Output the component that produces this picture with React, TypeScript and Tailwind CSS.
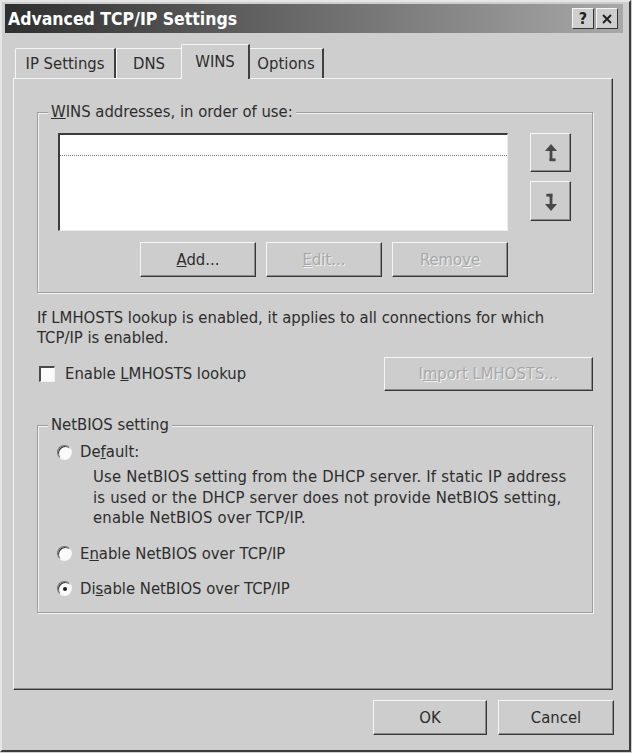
import React from "react";

function Btn({
  children,
  disabled,
  className,
}: {
  children: React.ReactNode;
  disabled?: boolean;
  className: string;
}) {
  return (
    <div
      className={
        "flex items-center justify-center bg-[#cdcdcd] border border-t-[#f6f6f6] border-l-[#f6f6f6] border-r-[#363636] border-b-[#363636] shadow-[inset_-1px_-1px_0_#8c8c8c] " +
        className
      }
    >
      <span
        className={
          disabled
            ? "text-[#a8a8a8] [text-shadow:1px_1px_0_#f3f3f3]"
            : "text-[#2c2c2c]"
        }
      >
        {children}
      </span>
    </div>
  );
}

function Radio({ checked }: { checked?: boolean }) {
  return (
    <div className="w-[15px] h-[15px] rounded-full bg-[#fafafa] border border-t-[#6e6e6e] border-l-[#6e6e6e] border-r-[#f4f4f4] border-b-[#f4f4f4] flex items-center justify-center shadow-[inset_1px_1px_0_#3a3a3a]">
      {checked && <div className="w-[4px] h-[4px] rounded-full bg-[#1e1e1e]" />}
    </div>
  );
}

function UpArrow() {
  return (
    <svg width="14" height="20" viewBox="0 0 14 20">
      <path d="M1 8 L7 1 L13 8 Z" fill="#484848" />
      <rect x="5.6" y="7" width="2.8" height="11" fill="#484848" />
      <rect x="5.6" y="15.4" width="6" height="2.8" fill="#484848" />
    </svg>
  );
}

function DownArrow() {
  return (
    <svg width="14" height="20" viewBox="0 0 14 20">
      <rect x="2.4" y="1.8" width="6" height="2.8" fill="#484848" />
      <rect x="5.6" y="1.8" width="2.8" height="11" fill="#484848" />
      <path d="M1 12 L7 19 L13 12 Z" fill="#484848" />
    </svg>
  );
}

export default function App() {
  return (
    <div className="w-[632px] h-[753px] overflow-hidden bg-[#cecece] font-['DejaVu_Sans_Condensed','DejaVu_Sans','Liberation_Sans',sans-serif] text-[16.5px] leading-[20px] text-[#2d2d2d]">
      <div className="w-[631px] h-[752px] border-t-2 border-l-2 border-t-[#e6e6e6] border-l-[#e6e6e6] border-r-2 border-b-2 border-r-[#3c3c3c] border-b-[#3c3c3c] flex flex-col">
        {/* Title bar */}
        <div className="ml-[3px] mt-[2px] w-[618px] h-[29px] bg-[linear-gradient(to_right,#2f2f2f,#5a5a5a_35%,#a8a8a8)] flex items-center pl-[3px] pr-[5px]">
          <span className="font-bold text-white text-[17.5px]">
            Advanced TCP/IP Settings
          </span>
          <div className="ml-auto flex gap-[2px]">
            <div className="w-[22px] h-[21px] bg-[#cecece] border border-t-[#f6f6f6] border-l-[#f6f6f6] border-r-[#363636] border-b-[#363636] flex items-center justify-center font-bold text-[16px] text-[#222]">
              ?
            </div>
            <div className="w-[22px] h-[21px] bg-[#cecece] border border-t-[#f6f6f6] border-l-[#f6f6f6] border-r-[#363636] border-b-[#363636] flex items-center justify-center">
              <svg width="10" height="10" viewBox="0 0 10 10">
                <path d="M1 1 L9 9 M9 1 L1 9" stroke="#222" strokeWidth="2" />
              </svg>
            </div>
          </div>
        </div>

        {/* Tabs */}
        <div className="mt-[11px] ml-[13px] h-[34px] flex items-start">
          <div className="mt-[4px] w-[101px] h-[30px] border-t border-l border-t-[#f6f6f6] border-l-[#f6f6f6] border-r-2 border-r-[#404040] rounded-tl-[2px] flex items-center justify-center">
            IP Settings
          </div>
          <div className="mt-[4px] w-[65px] h-[30px] border-t border-l border-t-[#f6f6f6] border-l-[#f6f6f6] flex items-center justify-center">
            DNS
          </div>
          <div className="relative z-10 w-[69px] h-[35px] bg-[#cecece] border-t border-l border-t-[#f6f6f6] border-l-[#f6f6f6] border-r-2 border-r-[#404040] rounded-tl-[2px] flex items-center justify-center">
            WINS
          </div>
          <div className="mt-[4px] w-[74px] h-[30px] border-t border-t-[#f6f6f6] border-r-2 border-r-[#404040] flex items-center justify-center">
            Options
          </div>
        </div>

        {/* Panel */}
        <div className="ml-[11px] w-[600px] h-[612px] border border-t-[#f6f6f6] border-l-[#f6f6f6] border-r-[#363636] border-b-[#363636] shadow-[inset_-1px_-1px_0_#8c8c8c] pl-[23px] flex flex-col">
          {/* WINS addresses group */}
          <div className="relative mt-[33px] w-[556px] h-[181px] border border-[#9d9d9d] shadow-[inset_1px_1px_0_#f3f3f3,1px_1px_0_#f3f3f3] pt-[20px] pl-[20px]">
            <div className="absolute -top-[11px] left-[10px] px-[3px] bg-[#cecece]">
              <u>W</u>INS addresses, in order of use:
            </div>
            <div className="flex">
              <div className="w-[450px] h-[98px] bg-white border-t-2 border-l-2 border-t-[#3c3c3c] border-l-[#3c3c3c] border-r border-b border-r-[#ededed] border-b-[#ededed]">
                <div className="h-[21px] border-b border-dotted border-[#7c7c7c]" />
              </div>
              <div className="ml-[22px] flex flex-col">
                <Btn className="w-[41px] h-[39px]">
                  <span className="flex pt-[1px]">
                    <UpArrow />
                  </span>
                </Btn>
                <Btn className="mt-[9px] w-[41px] h-[40px]">
                  <span className="flex pt-[1px]">
                    <DownArrow />
                  </span>
                </Btn>
              </div>
            </div>
            <div className="mt-[11px] w-[450px] flex justify-end gap-[10px]">
              <Btn className="w-[116px] h-[35px]">
                <u>A</u>dd...
              </Btn>
              <Btn className="w-[116px] h-[35px]" disabled>
                <u>E</u>dit...
              </Btn>
              <Btn className="w-[116px] h-[35px]" disabled>
                Remo<u>v</u>e
              </Btn>
            </div>
          </div>

          <div className="mt-[15px]">
            If LMHOSTS lookup is enabled, it applies to all connections for which
            <br />
            TCP/IP is enabled.
          </div>

          <div className="mt-[9px] w-[556px] h-[34px] flex items-center">
            <div className="ml-[2px] w-[16px] h-[16px] bg-[#fafafa] border-t-2 border-l-2 border-t-[#4a4a4a] border-l-[#4a4a4a] border-r border-b border-r-[#f0f0f0] border-b-[#f0f0f0]" />
            <span className="ml-[10px]">
              Enable <u>L</u>MHOSTS lookup
            </span>
            <Btn className="ml-auto w-[209px] h-[34px]" disabled>
              I<u>m</u>port LMHOSTS...
            </Btn>
          </div>

          {/* NetBIOS group */}
          <div className="relative mt-[34px] w-[556px] h-[188px] border border-[#9d9d9d] shadow-[inset_1px_1px_0_#f3f3f3,1px_1px_0_#f3f3f3] pt-[16px] pl-[19px]">
            <div className="absolute -top-[11px] left-[10px] px-[3px] bg-[#cecece]">
              NetBIOS setting
            </div>
            <div className="flex items-center gap-[8px]">
              <Radio />
              <span>
                De<u>f</u>ault:
              </span>
            </div>
            <div className="mt-[5px] pl-[36px] leading-[20.5px] tracking-[0.2px]">
              Use NetBIOS setting from the DHCP server. If static IP address
              <br />
              is used or the DHCP server does not provide NetBIOS setting,
              <br />
              enable NetBIOS over TCP/IP.
            </div>
            <div className="mt-[15px] flex items-center gap-[8px]">
              <Radio />
              <span>
                E<u>n</u>able NetBIOS over TCP/IP
              </span>
            </div>
            <div className="mt-[15px] flex items-center gap-[8px]">
              <Radio checked />
              <span>
                Di<u>s</u>able NetBIOS over TCP/IP
              </span>
            </div>
          </div>
        </div>

        {/* Bottom buttons */}
        <div className="mt-[10px] ml-[11px] w-[601px] flex justify-end gap-[11px]">
          <Btn className="w-[114px] h-[35px]">OK</Btn>
          <Btn className="w-[116px] h-[35px]">Cancel</Btn>
        </div>
      </div>
    </div>
  );
}
